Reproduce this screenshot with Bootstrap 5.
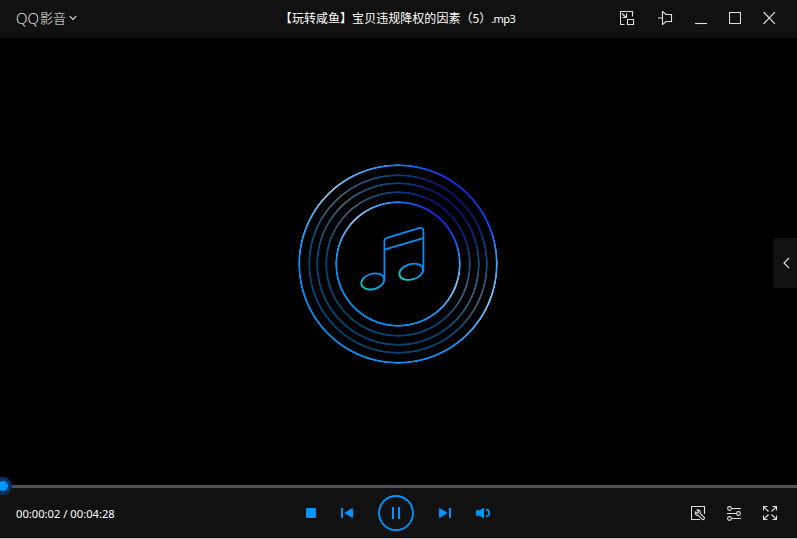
<!DOCTYPE html>
<html lang="zh-CN">
<head>
<meta charset="utf-8">
<meta name="viewport" content="width=device-width, initial-scale=1">
<title>QQ影音</title>
<link href="https://cdn.jsdelivr.net/npm/bootstrap@5.3.0/dist/css/bootstrap.min.css" rel="stylesheet">
<style>
body{background:#000;color:#fff;font-family:"Noto Sans","Noto Sans CJK SC",sans-serif;font-size:12px;line-height:1}
svg{display:block;flex:none;fill:none;stroke:#dedede;stroke-width:1.1}
button{background:none;border:0;padding:0;display:block}
.side{flex:1 1 0}
.titlebar{height:38px;background:#111;padding-bottom:2px}
.brand{font-family:"Open Sans","Noto Sans CJK SC",sans-serif;font-weight:300;font-size:13px;color:#eee;padding-left:16px;gap:3px}
.brand-qq{font-size:15px;margin-right:1px}
.song{font-family:"Noto Sans CJK SC",sans-serif;font-size:12px;letter-spacing:.04px;white-space:nowrap;padding-left:3px}
.song-ext{font-family:"Noto Sans",sans-serif;font-size:11px;letter-spacing:-.6px}
.win-tools{padding-right:21px}
.gap-win{margin-left:22px}
.disc{width:200px;height:200px;margin-top:4px;margin-right:1px}
.ring{grid-area:1/1;border-radius:50%;background:conic-gradient(#1680fa 0deg,#1238f2 24deg,#1028e8 45deg,#0c50ff 68deg,#2894f5 85deg,#82c2f5 112deg,#0c90f5 145deg,#0090f5 180deg,#0090f5 270deg,#2c9df0 290deg,#90c4ea 318deg,#45a5f0 335deg,#1680fa 360deg);
-webkit-mask:radial-gradient(closest-side,transparent calc(100% - 2.6px),#000 calc(100% - 1.8px),#000 calc(100% - .6px),transparent 100%);mask:radial-gradient(closest-side,transparent calc(100% - 2.6px),#000 calc(100% - 1.8px),#000 calc(100% - .6px),transparent 100%)}
.ring-1{width:200px;height:200px}
.ring-2{width:180px;height:180px;opacity:.48}
.ring-3{width:164px;height:164px;opacity:.48}
.ring-4{width:146px;height:146px;opacity:.48}
.ring-5{width:126px;height:126px}
.note{grid-area:1/1}
.drawer{right:0;top:200px;width:24px;height:50px;background:#111;border-radius:2px 0 0 2px;padding-left:1px}
.track{height:3px;background:#505050}
.knob{left:-6px;top:-8px;width:18px;height:18px;border-radius:50%;background:#033660;z-index:2}
.knob-core{width:10px;height:10px;border-radius:50%;background:#0094ff}
.controls{height:50px;background:#111}
.time{font-size:11.2px;padding:2px 0 0 16px}
.transport{gap:25px;margin-left:3px}
.transport svg{stroke:none;fill:#0094ff}
.extras{gap:21px;padding-right:19px}
.baseline-edge{height:1px;background:#c9c5c2}
</style>
<script src="https://cdn.jsdelivr.net/npm/bootstrap@5.3.0/dist/js/bootstrap.bundle.min.js"></script>
</head>
<body class="vh-100 d-flex flex-column overflow-hidden">
<header class="titlebar d-flex align-items-center flex-shrink-0">
  <div class="brand side d-flex align-items-center">
    <span class="d-flex align-items-center"><span class="brand-qq">QQ</span>影音</span>
    <svg width="8" height="6" viewBox="0 0 8 6"><path d="M.7 1.2 4 4.5 7.3 1.2"/></svg>
  </div>
  <div class="song">【玩转咸鱼】宝贝违规降权的因素（5）<span class="song-ext">.mp3</span></div>
  <div class="win-tools side d-flex align-items-center justify-content-end">
    <button aria-label="迷你模式"><svg width="15" height="15" viewBox="0 0 15 15"><path d="M4.500 13.500h-4V.5h12v5M2 2.500l4 4M6.500 2.500v4h-4M7.500 8.500h6v5h-6z"/></svg></button>
    <button style="margin-left:23px" aria-label="置顶"><svg width="15" height="16" viewBox="0 0 15 16"><path d="M0 8h4.500M4.500 1v14M4.500 1.300 8 4.500h5.500v7H8l-3.500 3"/></svg></button>
    <button class="gap-win" aria-label="最小化"><svg width="12" height="14" viewBox="0 0 12 14"><path d="M0 12.500h12"/></svg></button>
    <button class="gap-win" aria-label="最大化"><svg width="12" height="12" viewBox="0 0 12 12"><path d="M.5.5h11v11H.5z"/></svg></button>
    <button class="gap-win" aria-label="关闭"><svg width="13" height="12" viewBox="0 0 13 12"><path d="m.5 0 11.500 12M12 0 .5 12"/></svg></button>
  </div>
</header>
<main class="flex-grow-1 position-relative d-flex justify-content-center align-items-center">
  <div class="disc d-grid" style="place-items:center">
    <div class="ring ring-1"></div><div class="ring ring-2"></div><div class="ring ring-3"></div><div class="ring ring-4"></div><div class="ring ring-5"></div>
    <svg class="note" width="100" height="100" viewBox="348 214 100 100" style="stroke-width:1.8">
      <defs><linearGradient id="head" x1="0" y1=".8" x2="1" y2=".3"><stop stop-color="#00e0d0"/><stop offset=".5" stop-color="#08a0ee"/><stop offset="1" stop-color="#0a88f5"/></linearGradient></defs>
      <path stroke="#0a8cf5" d="M384.400 281V241q0-2.500 2.400-3.200L419 228.100q4.400-1.100 4.400 3.200V271M384.400 249.600l39-11.500"/>
      <ellipse stroke="url(#head)" cx="372.800" cy="281.400" rx="11.700" ry="7.700" transform="rotate(-16 372.800 281.400)"/>
      <ellipse stroke="url(#head)" cx="411.300" cy="271.800" rx="12.200" ry="7.700" transform="rotate(-16 411.300 271.800)"/>
    </svg>
  </div>
  <button class="drawer position-absolute d-flex align-items-center justify-content-center" aria-label="播放列表"><svg width="8" height="12" viewBox="0 0 8 12" style="stroke-width:1.2"><path d="M7 1 2 6l5 5"/></svg></button>
</main>
<div class="track position-relative flex-shrink-0"><div class="knob position-absolute d-flex align-items-center justify-content-center"><div class="knob-core"></div></div></div>
<footer class="controls d-flex align-items-center flex-shrink-0">
  <div class="time side">00:00:02 / 00:04:28</div>
  <div class="transport d-flex align-items-center">
    <button aria-label="停止"><svg width="10" height="10"><rect width="10" height="10" rx="1"/></svg></button>
    <button aria-label="上一个"><svg width="12" height="10" viewBox="0 0 12 10"><path d="M0 0h2v10H0zM12 1v8q0 1-1 .7L4 5.600v-1.200L11 .3q1-.3 1 .7z"/></svg></button>
    <button aria-label="暂停"><svg width="36" height="36" viewBox="0 0 36 36"><circle cx="18" cy="18" r="17" style="fill:none;stroke:#0094ff;stroke-width:1.8"/><path d="M14 12h2v12h-2zM20 12h2v12h-2z"/></svg></button>
    <button aria-label="下一个"><svg width="12" height="10" viewBox="0 0 12 10"><path d="M10 0h2v10h-2zM0 1v8q0 1 1 .7L8 5.600v-1.200L1 .3q-1-.3-1 .7z"/></svg></button>
    <button aria-label="音量"><svg width="15" height="10" viewBox="0 0 15 10"><path d="M0 2.300h3.500L7 0h1v10H7L3.500 7.700H0z"/><path d="M10 1.700c4.400.2 4.400 6.400 0 6.600" style="fill:none;stroke:#0094ff;stroke-width:1.700"/></svg></button>
  </div>
  <div class="extras side d-flex justify-content-end align-items-center">
    <button aria-label="工具箱"><svg width="15" height="15" viewBox="0 0 15 15"><path d="M9 13.500H.5V.5h13V8"/><path d="m6 4 1.600 2-1.400 1.500L4.500 6c-.8 2 .7 3.700 2.700 3.300l4 4c1.300 1 2.900-.6 2-1.900L9.200 7.500C9.800 5.300 8.300 3.500 6 4z"/></svg></button>
    <button aria-label="设置"><svg width="15" height="15" viewBox="0 0 15 15"><path d="M4.500 2.500H14M0 7.500h9.500M4.500 12.500H14"/><circle cx="2.500" cy="2.500" r="1.900"/><circle cx="11.500" cy="7.500" r="1.900"/><circle cx="2.500" cy="12.500" r="1.900"/></svg></button>
    <button aria-label="全屏"><svg width="15" height="15" viewBox="0 0 15 15"><path d="M.5 4.500v-4h4M9.500.5h4v4M13.500 9.500v4h-4M4.500 13.500h-4v-4M.5.500l5 5M13.500.5l-5 5M13.500 13.500l-5-5M.5 13.500l5-5"/></svg></button>
  </div>
</footer>
<div class="baseline-edge flex-shrink-0"></div>
</body>
</html>
